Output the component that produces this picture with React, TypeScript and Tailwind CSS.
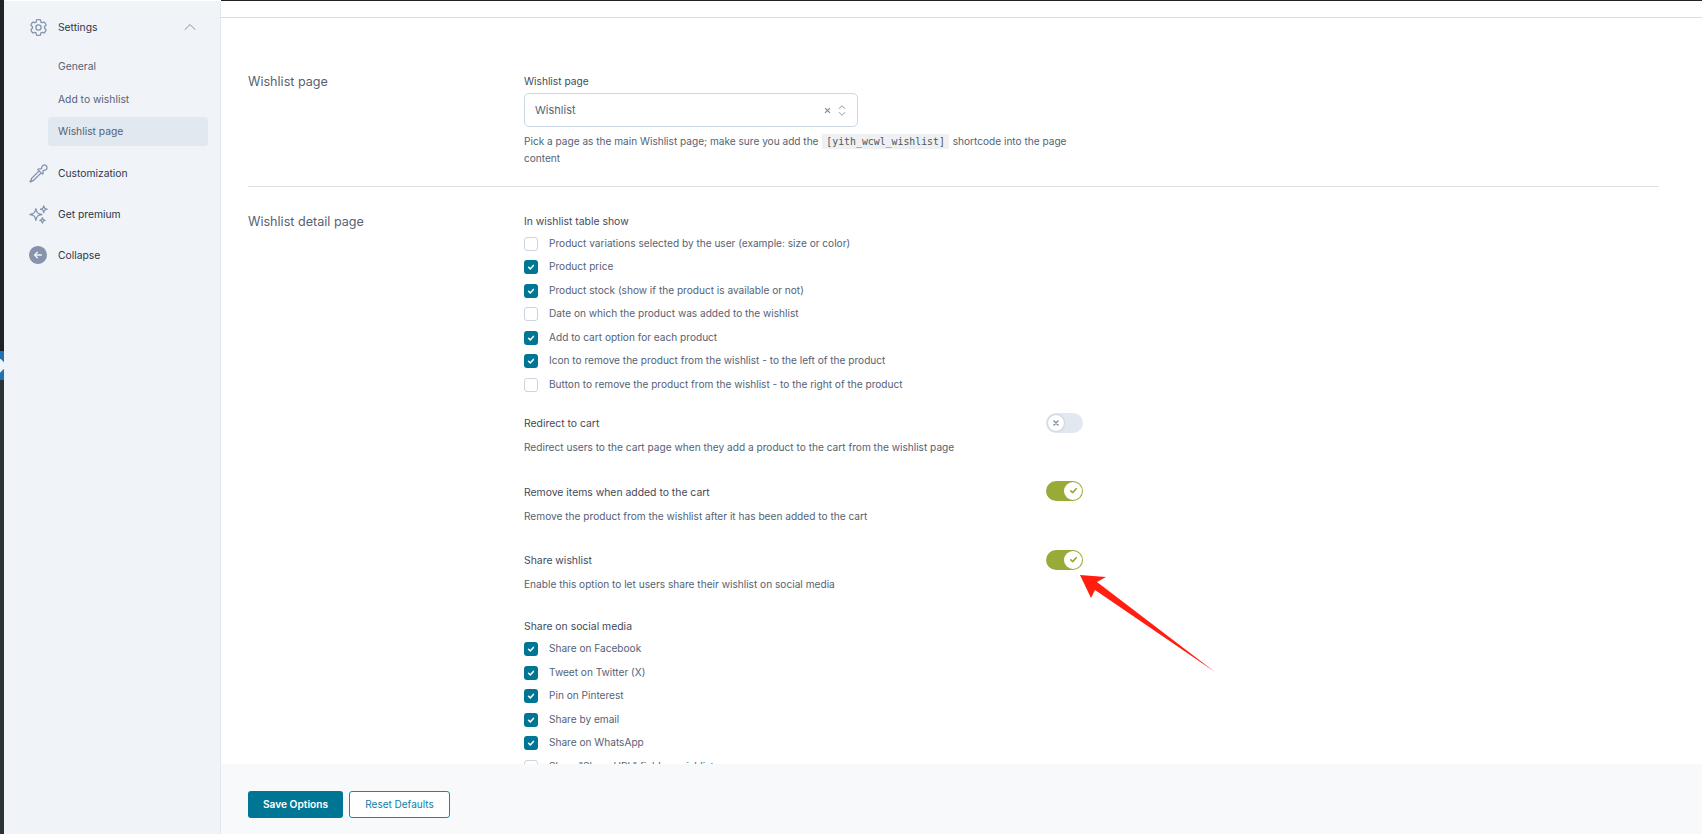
import React from "react";
import {
  HiOutlineCog6Tooth,
  HiOutlineEyeDropper,
  HiOutlineSparkles,
  HiArrowLeftCircle,
  HiOutlineChevronUp,
} from "react-icons/hi2";

const Check = ({ on }: { on: boolean }) =>
  on ? (
    <span className="flex h-[14px] w-[14px] shrink-0 items-center justify-center rounded-[3px] bg-[#007694]">
      <svg viewBox="0 0 10 10" className="h-[8px] w-[8px]" fill="none" stroke="#fff" strokeWidth="1.9" strokeLinecap="round" strokeLinejoin="round">
        <path d="M2 5.4 4.1 7.4 8 3" />
      </svg>
    </span>
  ) : (
    <span className="h-[14px] w-[14px] shrink-0 rounded-[3px] border border-[#cbd5e1] bg-white" />
  );

const CheckRow = ({ on, label }: { on: boolean; label: string }) => (
  <div className="flex h-[23.5px] items-center gap-[11px] text-[10.1px] text-[#566274]">
    <Check on={on} />
    <span className="-mt-[1px]">{label}</span>
  </div>
);

const Toggle = ({ on }: { on: boolean }) =>
  on ? (
    <span className="flex h-[20px] w-[37px] shrink-0 items-center justify-end rounded-full bg-[#9aaa38] pr-[1px]">
      <span className="flex h-[18px] w-[18px] items-center justify-center rounded-full bg-white">
        <svg viewBox="0 0 10 10" className="h-[9px] w-[9px]" fill="none" stroke="#9aaa38" strokeWidth="1.9" strokeLinecap="round" strokeLinejoin="round">
          <path d="M2 5.4 4.1 7.4 8 3" />
        </svg>
      </span>
    </span>
  ) : (
    <span className="flex h-[20px] w-[37px] shrink-0 items-center rounded-full bg-[#e2e8f0] pl-[2px]">
      <span className="flex h-[16px] w-[16px] items-center justify-center rounded-full bg-white shadow-[0_0_2px_rgba(100,116,139,0.5)]">
        <svg viewBox="0 0 10 10" className="h-[8px] w-[8px]" fill="none" stroke="#8593ab" strokeWidth="2" strokeLinecap="round">
          <path d="M2.5 2.5 7.5 7.5M7.5 2.5 2.5 7.5" />
        </svg>
      </span>
    </span>
  );

const ToggleField = ({ title, desc, on, cls, toggleCls }: { title: string; desc: string; on: boolean; cls: string; toggleCls: string }) => (
  <div className={`flex w-[559px] items-start justify-between ${cls}`}>
    <div>
      <div className="pt-[1px] text-[10.4px] leading-[16px] text-[#3f4a5a]">{title}</div>
      <div className="mt-[7px] text-[10.13px] leading-[16px] text-[#566274]">{desc}</div>
    </div>
    <div className={toggleCls}>
      <Toggle on={on} />
    </div>
  </div>
);

const NavItem = ({ icon, label, cls }: { icon: React.ReactNode; label: string; cls: string }) => (
  <div className={`flex h-[24px] items-center pl-[24px] ${cls}`}>
    <span className="flex w-[30px] shrink-0 items-center text-[#8593ab]">{icon}</span>
    <span className="mt-[1px] text-[10.3px] text-[#2c3648]">{label}</span>
  </div>
);

export default function App() {
  return (
    <div
      className="relative flex h-[834px] w-[1702px] overflow-hidden bg-white"
      style={{ fontFamily: "Inter, 'Noto Sans', sans-serif" }}
    >
      {/* admin strip */}
      <div className="flex w-[4px] shrink-0 flex-col bg-[#1d2327]">
        <div className="h-[351px]" />
        <div className="relative h-[29px] overflow-hidden bg-[#2271b1]">
          <span className="absolute left-[-6px] top-[9px] h-[11px] w-[11px] rotate-45 bg-[#f0f4f9]" />
        </div>
        <div className="flex-1 bg-[#2c3338]" />
      </div>

      {/* sidebar */}
      <aside className="mt-[1px] flex w-[217px] shrink-0 flex-col border-r border-[#e2e8f0] bg-[#f0f4f9]">
        <div className="mt-[14px] flex h-[24px] items-center justify-between pl-[24px] pr-[22px]">
          <div className="flex items-center">
            <span className="flex w-[30px] items-center text-[#8593ab]">
              <HiOutlineCog6Tooth className="h-[21px] w-[21px]" />
            </span>
            <span className="mt-[1px] text-[10.3px] text-[#2c3648]">Settings</span>
          </div>
          <HiOutlineChevronUp className="h-[16px] w-[16px] text-[#8593ab]" />
        </div>
        <div className="mt-[15px] flex flex-col pl-[44px] pr-[12px] text-[10.3px] text-[#566274]">
          <div className="flex h-[24px] items-center pl-[10px] pt-[2px]">General</div>
          <div className="mt-[9px] flex h-[24px] items-center pl-[10px] pt-[2px]">Add to wishlist</div>
          <div className="mt-[6px] flex h-[29px] items-center rounded-[3px] bg-[#e2e8f0] pl-[10px]">Wishlist page</div>
        </div>
        <NavItem cls="mt-[15px]" label="Customization" icon={<HiOutlineEyeDropper className="h-[21px] w-[21px]" />} />
        <NavItem cls="mt-[17px]" label="Get premium" icon={<HiOutlineSparkles className="h-[21px] w-[21px]" />} />
        <NavItem cls="mt-[17px]" label="Collapse" icon={<HiArrowLeftCircle className="h-[22px] w-[22px] -ml-[1px]" />} />
      </aside>

      {/* main */}
      <main className="flex min-w-0 flex-1 flex-col border-t border-[#1d2327]">
        <div className="min-h-0 flex-1 overflow-hidden">
          <div className="mt-[16px] border-t border-[#d5dce6]" />
          <div className="pl-[27px] pr-[43px]">
            {/* row 1 */}
            <section className="flex h-[169px] border-b border-[#dcdfe3]">
              <h2 className="mt-[55px] h-[18px] w-[276px] shrink-0 text-[12.6px] font-normal leading-[18px] text-[#566274]">Wishlist page</h2>
              <div className="w-[545px]">
                <div className="mt-[55px] text-[10.2px] leading-[16px] text-[#3f4a5a]">Wishlist page</div>
                <div className="mt-[4px] flex h-[34px] w-[334px] items-center justify-between rounded-[5px] border border-[#ccd6e4] pl-[10px] pr-[11px]">
                  <span className="mt-[1px] text-[11px] text-[#566274]">Wishlist</span>
                  <span className="flex items-center gap-[7px] text-[#8593ab]">
                    <svg viewBox="0 0 10 10" className="h-[7px] w-[7px]" fill="none" stroke="#7b8797" strokeWidth="1.6">
                      <path d="M1.5 1.5 8.5 8.5M8.5 1.5 1.5 8.5" />
                    </svg>
                    <svg viewBox="0 0 10 16" className="h-[13px] w-[8px]" fill="none" stroke="#8593ab" strokeWidth="1.2" strokeLinecap="round" strokeLinejoin="round">
                      <path d="M1.5 5.5 5 2l3.5 3.5M1.5 10.5 5 14l3.5-3.5" />
                    </svg>
                  </span>
                </div>
                <p className="mt-[6px] text-[10.1px] leading-[17px] text-[#566274]">
                  Pick a page as the main Wishlist page; make sure you add the{" "}
                  <code
                    className="mx-[1px] bg-[#eff0f1] px-[4px] py-[2px] text-[9.85px] text-[#50575e]"
                    style={{ fontFamily: "'DejaVu Sans Mono', monospace" }}
                  >
                    [yith_wcwl_wishlist]
                  </code>{" "}
                  shortcode into the page content
                </p>
              </div>
            </section>

            {/* row 2 */}
            <section className="flex">
              <h2 className="mt-[26px] h-[18px] w-[276px] shrink-0 text-[12.6px] font-normal leading-[18px] text-[#566274]">Wishlist detail page</h2>
              <div>
                <div className="mt-[27px] text-[10.4px] leading-[16px] text-[#3f4a5a]">In wishlist table show</div>
                <div className="mt-[2px]">
                  <CheckRow on={false} label="Product variations selected by the user (example: size or color)" />
                  <CheckRow on label="Product price" />
                  <CheckRow on label="Product stock (show if the product is available or not)" />
                  <CheckRow on={false} label="Date on which the product was added to the wishlist" />
                  <CheckRow on label="Add to cart option for each product" />
                  <CheckRow on label="Icon to remove the product from the wishlist - to the left of the product" />
                  <CheckRow on={false} label="Button to remove the product from the wishlist - to the right of the product" />
                </div>
                <ToggleField cls="mt-[18px]" toggleCls="-mt-[2px]" on={false} title="Redirect to cart" desc="Redirect users to the cart page when they add a product to the cart from the wishlist page" />
                <ToggleField cls="mt-[29px]" toggleCls="-mt-[3px]" on title="Remove items when added to the cart" desc="Remove the product from the wishlist after it has been added to the cart" />
                <ToggleField cls="mt-[28px]" toggleCls="-mt-[2px]" on title="Share wishlist" desc="Enable this option to let users share their wishlist on social media" />
                <div className="mt-[27px] text-[10.4px] leading-[16px] text-[#3f4a5a]">Share on social media</div>
                <div className="mt-[3px]">
                  <CheckRow on label="Share on Facebook" />
                  <CheckRow on label="Tweet on Twitter (X)" />
                  <CheckRow on label="Pin on Pinterest" />
                  <CheckRow on label="Share by email" />
                  <CheckRow on label="Share on WhatsApp" />
                  <CheckRow on={false} label="Show &quot;Share URL&quot; field on wishlist page" />
                </div>
              </div>
            </section>
          </div>
        </div>

        <footer className="flex h-[70px] shrink-0 items-start gap-[6px] bg-[#f8f9fb] px-[27px] pt-[27px]">
          <button className="h-[27px] w-[95px] rounded-[3px] bg-[#007694] text-[10.2px] font-semibold text-white">Save Options</button>
          <button className="h-[27px] w-[101px] rounded-[3px] border border-[#0e8ab3] bg-white text-[10px] text-[#0e7ea6]">Reset Defaults</button>
        </footer>
      </main>

      {/* annotation arrow */}
      <svg className="pointer-events-none absolute left-[1070px] top-[565px] h-[120px] w-[160px]" viewBox="0 0 160 120">
        <polygon points="10,10 36,12 27,17 145,107 25,25 21,33" fill="#ff1e10" />
      </svg>
    </div>
  );
}
